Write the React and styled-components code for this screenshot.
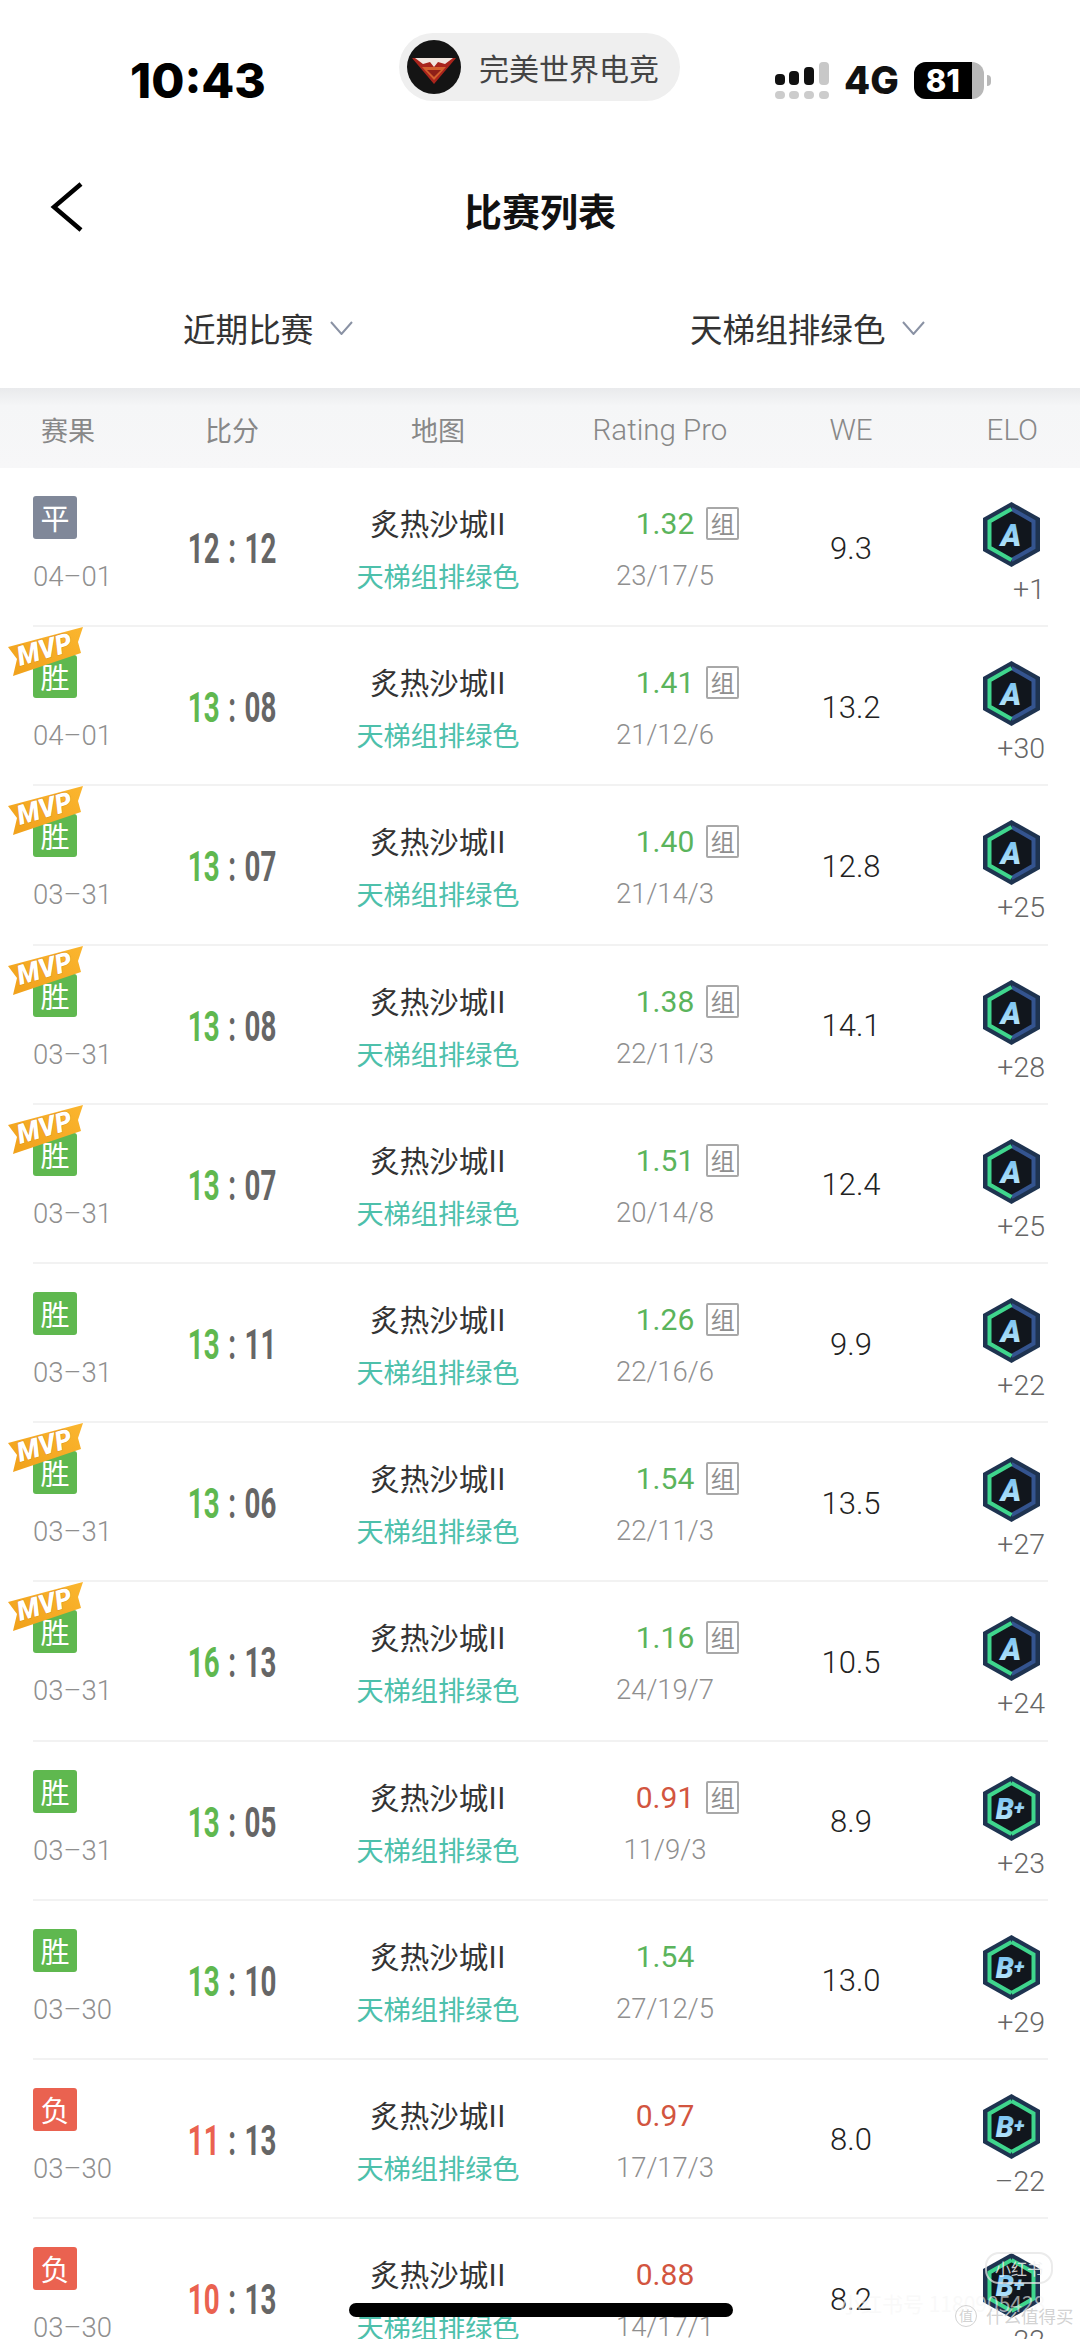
import React from 'react'
import styled, { createGlobalStyle } from 'styled-components'

const CJK = `"Noto Sans CJK SC", sans-serif`
const LATIN = `Roboto, "Noto Sans CJK SC", sans-serif`
const COLS = '100px 198px 214px 240px 132px 131px'

const GlobalStyle = createGlobalStyle`
  html, body { margin: 0; padding: 0; background: #fff; }
  body { font-family: ${CJK}; }
`

const Page = styled.div`
  position: relative;
  width: 1080px;
  height: 2339px;
  overflow: hidden;
  background: #fff;
`

const StatusBar = styled.div`
  display: flex;
  align-items: flex-start;
  height: 130px;
  padding-left: 130px;
  box-sizing: border-box;
`

const Time = styled.div`
  width: 269px;
  margin-top: 53px;
  font: 800 48px/56px Inter, sans-serif;
  color: #000;
`

const IslandPill = styled.div`
  display: flex;
  align-items: center;
  gap: 18px;
  width: 281px;
  height: 68px;
  margin-top: 33px;
  padding-left: 8px;
  box-sizing: border-box;
  border-radius: 34px;
  background: #efefef;
  font-size: 30px;
  line-height: 40px;
  color: #444;
`

const StatusRight = styled.div`
  display: flex;
  align-items: center;
  margin-left: 95px;
  margin-top: 61px;
`

const NetworkLabel = styled.div`
  margin: 0 15px 0 15px;
  font: 800 38px/38px Inter, sans-serif;
  color: #111;
`

const BatteryBody = styled.div`
  display: flex;
  width: 70px;
  height: 37px;
  border-radius: 12px;
  overflow: hidden;
  background: #b8b8b8;
`

const BatteryFill = styled.div`
  width: 58px;
  text-align: center;
  background: #000;
  color: #fff;
  font: 800 31px/37px Inter, sans-serif;
`

const BatteryTip = styled.div`
  width: 4px;
  height: 11px;
  margin-left: 3px;
  border-radius: 0 5px 5px 0;
  background: #b8b8b8;
`

const NavBar = styled.div`
  position: relative;
  display: flex;
  align-items: center;
  justify-content: center;
  height: 150px;
  padding-top: 10px;
  box-sizing: border-box;
`

const BackButton = styled.svg`
  position: absolute;
  left: 50px;
  top: 52px;
`

const Title = styled.h1`
  margin: 0;
  font-size: 38px;
  line-height: 50px;
  font-weight: 700;
  color: #111;
`

const FilterBar = styled.div`
  display: grid;
  grid-template-columns: 507px 1fr;
  height: 108px;
  padding: 0 0 12px 183px;
  box-sizing: border-box;
  align-items: center;
`

const Filter = styled.div`
  display: flex;
  align-items: center;
  gap: 17px;
  font-size: 32.6px;
  line-height: 44px;
  color: #333;
`

const TableHead = styled.div`
  display: grid;
  grid-template-columns: ${COLS};
  height: 80px;
  padding: 4px 0 0 33px;
  box-sizing: border-box;
  align-items: center;
  background: linear-gradient(#e9eaec 0, #f5f6f7 18px, #f7f7f8 100%);
  font: 400 27px/36px ${CJK};
  color: #888;
`

const HeadCell = styled.div`
  text-align: ${(p) => p.$align || 'center'};
  padding-left: ${(p) => p.$left || 0}px;
  padding-right: ${(p) => p.$right || 0}px;
  font-family: ${(p) => (p.$latin ? LATIN : CJK)};
  font-size: ${(p) => (p.$latin ? 29.5 : 27)}px;
  font-weight: ${(p) => (p.$latin ? 300 : 400)};
`

const Row = styled.div`
  display: grid;
  grid-template-columns: ${COLS};
  width: 1015px;
  height: 159.2px;
  margin-left: 33px;
  box-sizing: border-box;
  border-bottom: 2px solid #f2f2f2;
`

const ResultCell = styled.div`
  display: flex;
  flex-direction: column;
  align-items: flex-start;
  padding-top: 28px;
`

const ResultBadge = styled.div`
  position: relative;
  width: 44px;
  height: 43px;
  border-radius: 3px;
  background: ${(p) => p.$bg};
  color: #fff;
  font-size: 29px;
  line-height: 42px;
  text-align: center;
`

const MvpRibbon = styled.svg`
  position: absolute;
  left: -25px;
  top: -28px;
  overflow: visible;
`

const DateText = styled.div`
  margin-top: 20px;
  font: 300 27.5px/36px ${LATIN};
  color: #8f8f8f;
`

const ScoreCell = styled.div`
  display: flex;
  align-items: center;
  justify-content: center;
  padding-top: 5px;
`

const Score = styled.div`
  display: flex;
  align-items: center;
  transform: scaleX(0.66);
  font: 700 42px/50px Roboto, sans-serif;
  white-space: nowrap;
  color: #666;
`

const ScoreLead = styled.span`
  color: ${(p) => p.$color};
`

const ScoreColon = styled.span`
  margin: 0 13px;
`

const StackCell = styled.div`
  display: flex;
  flex-direction: column;
  align-items: center;
  padding-top: 36px;
`

const MapName = styled.div`
  font-size: 29.5px;
  line-height: 36px;
  color: #333;
`

const TeamName = styled.div`
  margin-top: 17px;
  font-size: 27.2px;
  line-height: 36px;
  color: #4dc0ab;
`

const Rating = styled.div`
  position: relative;
  margin-top: 2px;
  font: 400 30px/36px ${LATIN};
  color: ${(p) => p.$color};
`

const GroupTag = styled.span`
  position: absolute;
  left: calc(100% + 12px);
  top: 1px;
  width: 33px;
  height: 33px;
  box-sizing: border-box;
  border: 2px solid #a8a8a8;
  border-radius: 2px;
  font: 400 24px/27px ${CJK};
  text-align: center;
  color: #8f8f8f;
`

const Kda = styled.div`
  margin-top: 16px;
  font: 300 27.5px/36px ${LATIN};
  color: #8f8f8f;
`

const WeCell = styled.div`
  display: flex;
  align-items: center;
  justify-content: center;
  padding-top: 4px;
  font: 300 31px/36px ${LATIN};
  color: #222;
`

const EloCell = styled.div`
  display: flex;
  flex-direction: column;
  align-items: flex-end;
  padding: 34px 3px 0 0;
`

const EloBadge = styled.svg`
  margin-right: 5px;
  display: block;
`

const EloDelta = styled.div`
  margin-top: 7px;
  font: 300 28.5px/32px ${LATIN};
  color: #666;
`

const HomeIndicator = styled.div`
  position: absolute;
  left: 349px;
  top: 2303px;
  width: 384px;
  height: 14px;
  border-radius: 7px;
  background: #000;
`

const WatermarkId = styled.div`
  position: absolute;
  left: 840px;
  top: 2288px;
  font-size: 21px;
  line-height: 30px;
  white-space: nowrap;
  color: rgba(246, 246, 246, 0.6);
`

const WatermarkStamp = styled.div`
  position: absolute;
  left: 985px;
  top: 2252px;
  width: 64px;
  height: 28px;
  border-radius: 14px;
  border: 2px solid rgba(228, 228, 228, 0.75);
  font-size: 16px;
  line-height: 28px;
  text-align: center;
  color: rgba(240, 240, 240, 0.85);
`

const WatermarkBrand = styled.div`
  position: absolute;
  left: 955px;
  top: 2304px;
  display: flex;
  align-items: center;
  gap: 9px;
  font-size: 17.5px;
  line-height: 24px;
  white-space: nowrap;
  color: rgba(205, 205, 205, 0.9);
`

const WatermarkSeal = styled.span`
  width: 20px;
  height: 20px;
  border: 1px solid rgba(205, 205, 205, 0.9);
  border-radius: 50%;
  font-size: 14px;
  line-height: 19px;
  text-align: center;
`

const WIN = '#5fb84f'
const LOSS = '#ea6250'
const DRAW = '#808899'
const RED = '#d2553f'
const GREEN = '#5bb45c'

const MATCHES = [
  { r: '平', d: '04–01', a: '12', b: '12', rt: '1.32', tag: true, k: '23/17/5', we: '9.3', g: 'A', e: '+1' },
  { r: '胜', mvp: true, d: '04–01', a: '13', b: '08', rt: '1.41', tag: true, k: '21/12/6', we: '13.2', g: 'A', e: '+30' },
  { r: '胜', mvp: true, d: '03–31', a: '13', b: '07', rt: '1.40', tag: true, k: '21/14/3', we: '12.8', g: 'A', e: '+25' },
  { r: '胜', mvp: true, d: '03–31', a: '13', b: '08', rt: '1.38', tag: true, k: '22/11/3', we: '14.1', g: 'A', e: '+28' },
  { r: '胜', mvp: true, d: '03–31', a: '13', b: '07', rt: '1.51', tag: true, k: '20/14/8', we: '12.4', g: 'A', e: '+25' },
  { r: '胜', d: '03–31', a: '13', b: '11', rt: '1.26', tag: true, k: '22/16/6', we: '9.9', g: 'A', e: '+22' },
  { r: '胜', mvp: true, d: '03–31', a: '13', b: '06', rt: '1.54', tag: true, k: '22/11/3', we: '13.5', g: 'A', e: '+27' },
  { r: '胜', mvp: true, d: '03–31', a: '16', b: '13', rt: '1.16', tag: true, k: '24/19/7', we: '10.5', g: 'A', e: '+24' },
  { r: '胜', d: '03–31', a: '13', b: '05', rt: '0.91', low: true, tag: true, k: '11/9/3', we: '8.9', g: 'B+', e: '+23' },
  { r: '胜', d: '03–30', a: '13', b: '10', rt: '1.54', k: '27/12/5', we: '13.0', g: 'B+', e: '+29' },
  { r: '负', d: '03–30', a: '11', b: '13', rt: '0.97', low: true, k: '17/17/3', we: '8.0', g: 'B+', e: '–22' },
  { r: '负', d: '03–30', a: '10', b: '13', rt: '0.88', low: true, k: '14/17/1', we: '8.2', g: 'B+', e: '–22' },
]

const resultColor = (r) => (r === '胜' ? WIN : r === '负' ? LOSS : DRAW)

const Logo = () => (
  <svg width="54" height="54" viewBox="0 0 54 54">
    <circle cx="27" cy="27" r="27" fill="#141414" />
    <path d="M5 18 L49 18 L27 44 Z" fill="#a9241c" />
    <path d="M15 27 L39 27 L27 40 Z" fill="#d4602e" />
    <path d="M20 30 L34 30 L27 37 Z" fill="#8e1f18" />
    <path d="M8 18 L46 18 L38 24 L31 22 L27 27 L23 22 L16 24 Z" fill="#f1e6df" />
  </svg>
)

const SignalIcon = () => (
  <svg width="54" height="37" viewBox="0 0 54 37">
    <rect x="0" y="12" width="10" height="11" rx="4" fill="#111" />
    <rect x="14" y="9" width="10" height="14" rx="4" fill="#111" />
    <rect x="29" y="5" width="10" height="18" rx="4" fill="#111" />
    <rect x="44" y="0" width="10" height="23" rx="4" fill="#c8c8c8" />
    {[0, 14, 29, 44].map((x) => (
      <rect key={x} x={x} y="29" width="10" height="8" rx="4" fill="#cccccc" />
    ))}
  </svg>
)

const Chevron = () => (
  <svg width="23" height="14" viewBox="0 0 23 14">
    <path d="M1 1 L11.5 13 L22 1" fill="none" stroke="#8a92a4" strokeWidth="2" />
  </svg>
)

const Ribbon = () => (
  <MvpRibbon width="75" height="49" viewBox="0 0 75 49">
    <defs>
      <linearGradient id="mvpFill" x1="0" y1="1" x2="1" y2="0">
        <stop offset="0" stopColor="#f0a01a" />
        <stop offset="1" stopColor="#fbb62f" />
      </linearGradient>
    </defs>
    <path d="M0 20 L75 0 L70 15 L73 26 L5 49 L9 32 Z" fill="url(#mvpFill)" />
    <text
      x="12"
      y="39"
      transform="rotate(-16 12 39)"
      fontFamily="Roboto, sans-serif"
      fontSize="27"
      fontWeight="900"
      fontStyle="italic"
      fill="#fff"
      stroke="#d98609"
      strokeWidth="0.8"
      paintOrder="stroke"
      textLength="56"
      lengthAdjust="spacingAndGlyphs"
    >
      MVP
    </text>
  </MvpRibbon>
)

const GradeBadge = ({ grade, id }) => {
  const isA = grade === 'A'
  return (
    <EloBadge width="57" height="65" viewBox="0 0 57 65">
      <defs>
        <linearGradient id={`grade${id}`} x1="0" y1="0" x2="0" y2="1">
          <stop offset="0" stopColor="#6dbcf0" />
          <stop offset="1" stopColor="#c4ecfc" />
        </linearGradient>
      </defs>
      <path d="M28.5 0 L57 16 L57 49 L28.5 65 L0 49 L0 16 Z" fill="#1e3350" />
      <path d="M28.5 7 L50.5 19.5 L50.5 45.5 L28.5 58 L6.5 45.5 L6.5 19.5 Z" fill="#11161d" />
      <path
        d="M28.5 7 L50.5 19.5 L50.5 45.5 L28.5 58"
        fill="none"
        stroke={isA ? '#34548f' : '#3fd68d'}
        strokeWidth="4"
      />
      <path
        d="M28.5 7 L6.5 19.5 L6.5 45.5 L28.5 58"
        fill="none"
        stroke="#3fd68d"
        strokeWidth="4"
      />
      <text
        x={isA ? 28 : 27}
        y={isA ? 44 : 43}
        textAnchor="middle"
        fontFamily="Roboto, sans-serif"
        fontSize={isA ? 31 : 29}
        fontWeight="900"
        fontStyle="italic"
        fill={`url(#grade${id})`}
      >
        {isA ? 'A' : (
          <>
            B<tspan fontSize="20" dy="-5">+</tspan>
          </>
        )}
      </text>
    </EloBadge>
  )
}

const MatchRow = ({ m, id }) => (
  <Row>
    <ResultCell>
      <ResultBadge $bg={resultColor(m.r)}>
        {m.r}
        {m.mvp && <Ribbon />}
      </ResultBadge>
      <DateText>{m.d}</DateText>
    </ResultCell>
    <ScoreCell>
      <Score>
        <ScoreLead $color={m.r === '胜' ? WIN : m.r === '负' ? LOSS : '#666'}>{m.a}</ScoreLead>
        <ScoreColon>:</ScoreColon>
        <span>{m.b}</span>
      </Score>
    </ScoreCell>
    <StackCell>
      <MapName>炙热沙城II</MapName>
      <TeamName>天梯组排绿色</TeamName>
    </StackCell>
    <StackCell>
      <Rating $color={m.low ? RED : GREEN}>
        {m.rt}
        {m.tag && <GroupTag>组</GroupTag>}
      </Rating>
      <Kda>{m.k}</Kda>
    </StackCell>
    <WeCell>{m.we}</WeCell>
    <EloCell>
      <GradeBadge grade={m.g} id={id} />
      <EloDelta>{m.e}</EloDelta>
    </EloCell>
  </Row>
)

export default function App() {
  return (
    <Page>
      <GlobalStyle />
      <StatusBar>
        <Time>10:43</Time>
        <IslandPill>
          <Logo />
          完美世界电竞
        </IslandPill>
        <StatusRight>
          <SignalIcon />
          <NetworkLabel>4G</NetworkLabel>
          <BatteryBody>
            <BatteryFill>81</BatteryFill>
          </BatteryBody>
          <BatteryTip />
        </StatusRight>
      </StatusBar>
      <NavBar>
        <BackButton width="36" height="50" viewBox="0 0 36 50">
          <path d="M31 2 L4 25 L31 48" fill="none" stroke="#000" strokeWidth="4.5" />
        </BackButton>
        <Title>比赛列表</Title>
      </NavBar>
      <FilterBar>
        <Filter>近期比赛<Chevron /></Filter>
        <Filter>天梯组排绿色<Chevron /></Filter>
      </FilterBar>
      <TableHead>
        <HeadCell $align="left" $left={8}>赛果</HeadCell>
        <HeadCell>比分</HeadCell>
        <HeadCell>地图</HeadCell>
        <HeadCell $latin $right={10}>Rating Pro</HeadCell>
        <HeadCell $latin>WE</HeadCell>
        <HeadCell $latin $align="right" $right={10}>ELO</HeadCell>
      </TableHead>
      {MATCHES.map((m, i) => (
        <MatchRow key={i} m={m} id={i} />
      ))}
      <WatermarkStamp>小红书</WatermarkStamp>
      <WatermarkId>小红书号 1180905428</WatermarkId>
      <WatermarkBrand>
        <WatermarkSeal>值</WatermarkSeal>
        什么值得买
      </WatermarkBrand>
      <HomeIndicator />
    </Page>
  )
}
